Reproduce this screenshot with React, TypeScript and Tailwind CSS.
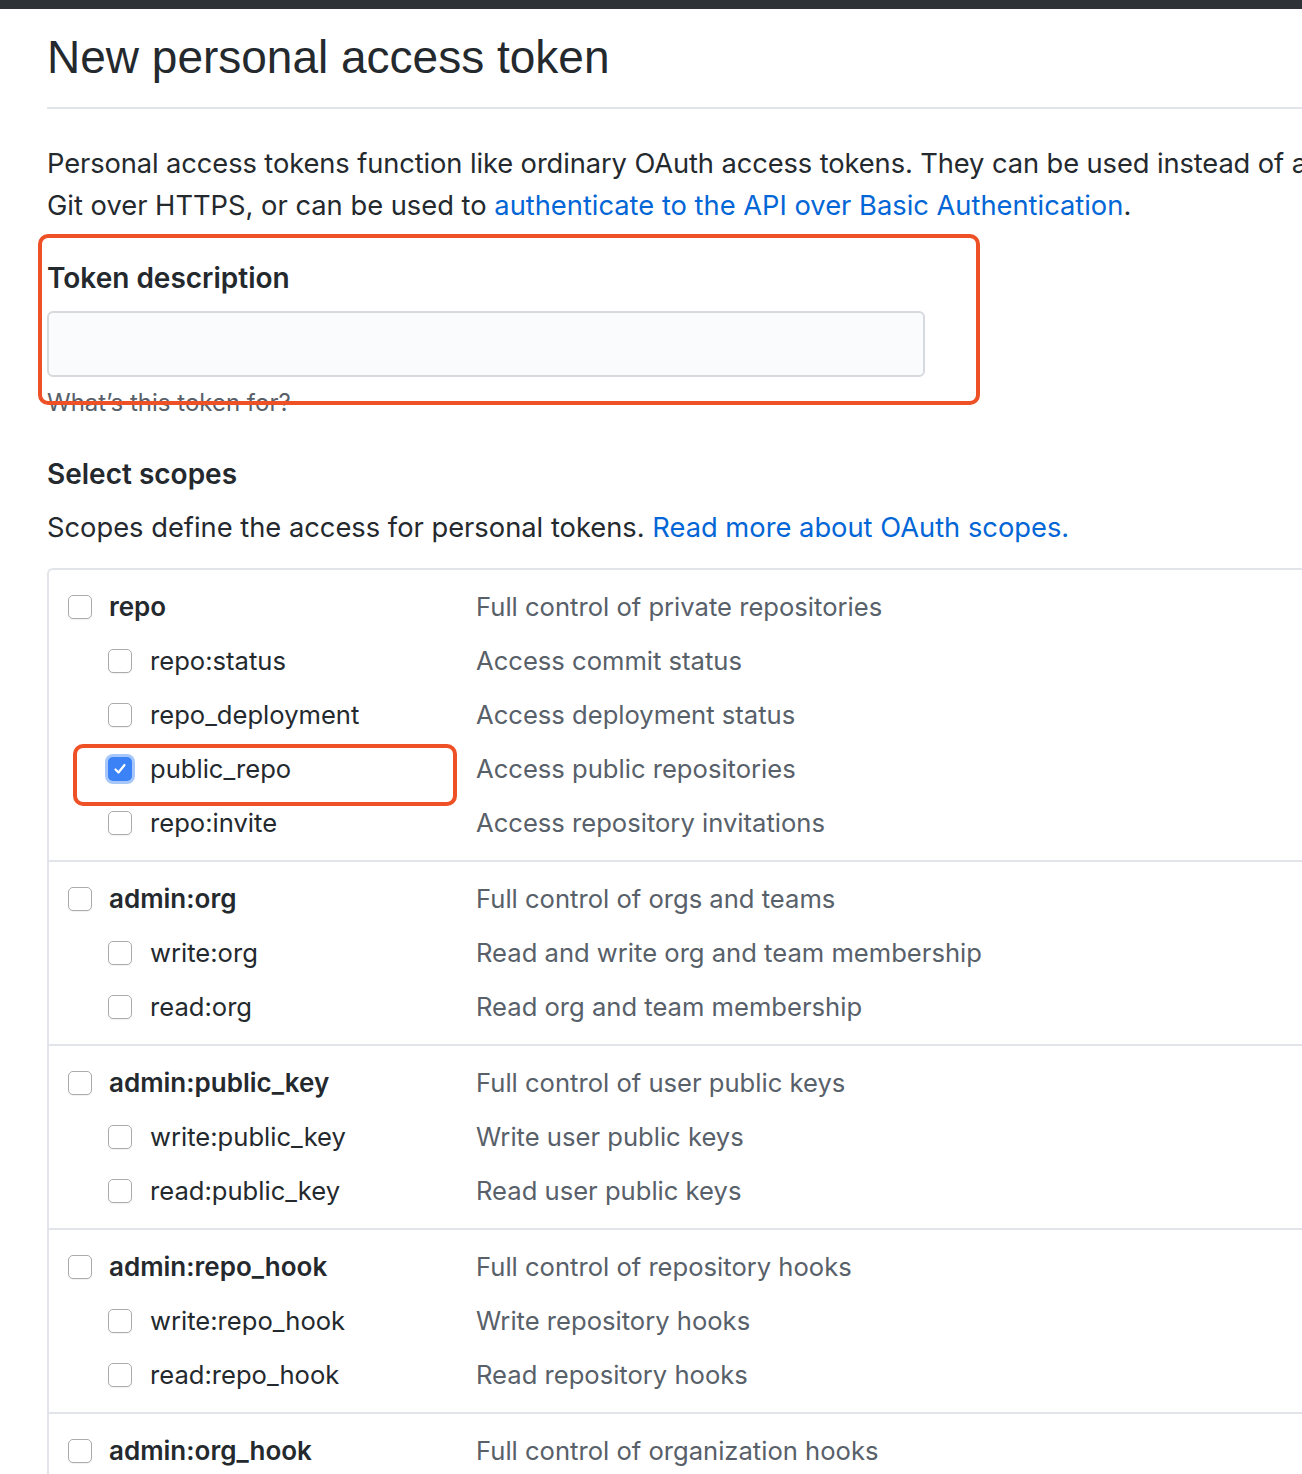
import React from "react";

type Scope = {
  name: string;
  desc: string;
  checked?: boolean;
};

type ScopeGroup = {
  parent: Scope;
  children: Scope[];
};

const groups: ScopeGroup[] = [
  {
    parent: { name: "repo", desc: "Full control of private repositories" },
    children: [
      { name: "repo:status", desc: "Access commit status" },
      { name: "repo_deployment", desc: "Access deployment status" },
      { name: "public_repo", desc: "Access public repositories", checked: true },
      { name: "repo:invite", desc: "Access repository invitations" },
    ],
  },
  {
    parent: { name: "admin:org", desc: "Full control of orgs and teams" },
    children: [
      { name: "write:org", desc: "Read and write org and team membership" },
      { name: "read:org", desc: "Read org and team membership" },
    ],
  },
  {
    parent: { name: "admin:public_key", desc: "Full control of user public keys" },
    children: [
      { name: "write:public_key", desc: "Write user public keys" },
      { name: "read:public_key", desc: "Read user public keys" },
    ],
  },
  {
    parent: { name: "admin:repo_hook", desc: "Full control of repository hooks" },
    children: [
      { name: "write:repo_hook", desc: "Write repository hooks" },
      { name: "read:repo_hook", desc: "Read repository hooks" },
    ],
  },
  {
    parent: { name: "admin:org_hook", desc: "Full control of organization hooks" },
    children: [],
  },
];

function Checkbox({ checked }: { checked?: boolean }) {
  if (checked) {
    return (
      <span className="flex h-[24px] w-[24px] shrink-0 items-center justify-center rounded-[5px] bg-[#3b82f6] shadow-[0_0_0_3px_rgba(59,130,246,0.45)]">
        <svg viewBox="0 0 16 16" className="h-[16px] w-[16px]" fill="none" stroke="white" strokeWidth={2.2} strokeLinecap="round" strokeLinejoin="round">
          <path d="M3.5 8.5l3 3 6-7.5" />
        </svg>
      </span>
    );
  }
  return (
    <span className="block h-[24px] w-[24px] shrink-0 rounded-[5px] border-[1.5px] border-[#ababab] bg-white shadow-[0_1px_1px_rgba(0,0,0,0.06)]" />
  );
}

function ScopeRow({ scope, top }: { scope: Scope; top?: boolean }) {
  return (
    <div className="flex h-[54px] items-center text-[25.6px]">
      <div className={`flex w-[427px] shrink-0 items-center ${top ? "pl-[19px] gap-[17px]" : "pl-[59px] gap-[18px]"}`}>
        <Checkbox checked={scope.checked} />
        <span className={top ? "text-[26px] font-semibold text-[#24292e]" : "text-[#24292e]"}>{scope.name}</span>
      </div>
      <span className="text-[#586069]">{scope.desc}</span>
    </div>
  );
}

export default function App() {
  return (
    <div
      className="relative h-[1474px] w-[1302px] overflow-hidden bg-white text-[27.3px] leading-[42px] text-[#24292e]"
      style={{ fontFamily: "Inter, 'Liberation Sans', sans-serif" }}
    >
      <div className="h-[9px] bg-[#2f3337]" />
      <div className="w-[1600px] pl-[47px]">
        <h1 className="mt-[18px] border-b-2 border-[#e1e4e8] pb-[20px] text-[46px] leading-[60px] font-normal font-['Liberation_Sans',sans-serif]">
          New personal access token
        </h1>
        <p className="mt-[34px] whitespace-nowrap">
          <span className="tracking-[-0.1px]">
            Personal access tokens function like ordinary OAuth access tokens. They can be used instead of a password for
          </span>
          <br />
          Git over HTTPS, or can be used to{" "}
          <a className="text-[#0366d6]">authenticate to the API over Basic Authentication</a>.
        </p>

        <div className="mt-[30px] text-[28px] font-semibold">Token description</div>
        <div className="mt-[12px] h-[66px] w-[878px] rounded-[6px] border-2 border-[#d6d9dd] bg-[#fafbfc]" />
        <div className="mt-[8px] text-[24px] leading-[36px] text-[#586069]">What’s this token for?</div>

        <div className="mt-[32px] text-[28px] font-semibold">Select scopes</div>
        <p className="mt-[12px]">
          Scopes define the access for personal tokens.{" "}
          <a className="text-[#0366d6]">Read more about OAuth scopes.</a>
        </p>

        <div className="mt-[19px] rounded-tl-[6px] border-l-2 border-t-2 border-[#e1e4e8]">
          {groups.map((g, i) => (
            <div key={g.parent.name} className={`py-[10px] ${i > 0 ? "border-t-2 border-[#e1e4e8]" : ""}`}>
              <ScopeRow scope={g.parent} top />
              {g.children.map((c) => (
                <ScopeRow key={c.name} scope={c} />
              ))}
            </div>
          ))}
        </div>
      </div>

      {/* annotation boxes */}
      <div className="absolute left-[38px] top-[234px] h-[171px] w-[942px] rounded-[10px] border-4 border-[#ee5126]" />
      <div className="absolute left-[73px] top-[744px] h-[62px] w-[384px] rounded-[10px] border-4 border-[#ee5126]" />
    </div>
  );
}
